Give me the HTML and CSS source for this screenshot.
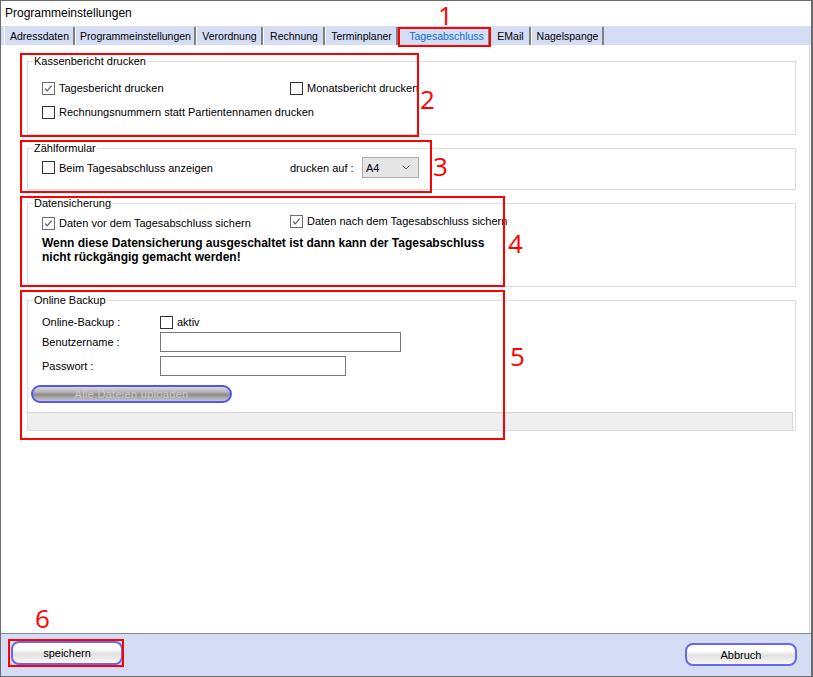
FILE: index.html
```html
<!DOCTYPE html>
<html lang="de">
<head>
<meta charset="utf-8">
<title>Programmeinstellungen</title>
<link rel="stylesheet" href="styles.css">
</head>
<body>
<div class="window">
  <div class="titlebar">Programmeinstellungen</div>
  <div class="tabs">
    <span class="tab t-adr">Adressdaten</span>
    <span class="tab t-prog">Programmeinstellungen</span>
    <span class="tab t-ver">Verordnung</span>
    <span class="tab t-rech">Rechnung</span>
    <span class="tab t-term">Terminplaner</span>
    <span class="tab t-tag active">Tagesabschluss</span>
    <span class="tab t-mail">EMail</span>
    <span class="tab t-nagel">Nagelspange</span>
  </div>
  <div class="content">
    <fieldset class="group g1">
      <legend>Kassenbericht drucken</legend>
      <div class="row r1">
        <label class="cb col1"><span class="box checked"><svg viewBox="0 0 13 13"><polyline points="2.5,6.5 5,9.2 10.2,3.2"/></svg></span>Tagesbericht drucken</label>
        <label class="cb"><span class="box"></span>Monatsbericht drucken</label>
      </div>
      <div class="row r2">
        <label class="cb"><span class="box"></span>Rechnungsnummern statt Partientennamen drucken</label>
      </div>
    </fieldset>

    <fieldset class="group g2">
      <legend>Zählformular</legend>
      <div class="row">
        <label class="cb col1"><span class="box"></span>Beim Tagesabschluss anzeigen</label>
        <span class="druck">drucken auf :</span>
        <span class="select">A4<svg class="chev" viewBox="0 0 8 5"><polyline points="0.5,0.5 4,4 7.5,0.5"/></svg></span>
      </div>
    </fieldset>

    <fieldset class="group g3">
      <legend>Datensicherung</legend>
      <div class="row r1">
        <label class="cb col1 vor"><span class="box checked"><svg viewBox="0 0 13 13"><polyline points="2.5,6.5 5,9.2 10.2,3.2"/></svg></span>Daten vor dem Tagesabschluss sichern</label>
        <label class="cb nach"><span class="box checked"><svg viewBox="0 0 13 13"><polyline points="2.5,6.5 5,9.2 10.2,3.2"/></svg></span>Daten nach dem Tagesabschluss sichern</label>
      </div>
      <p class="warn">Wenn diese Datensicherung ausgeschaltet ist dann kann der Tagesabschluss<br>nicht rückgängig gemacht werden!</p>
    </fieldset>

    <fieldset class="group g4">
      <legend>Online Backup</legend>
      <div class="row f1">
        <span class="flabel">Online-Backup :</span>
        <label class="cb"><span class="box"></span>aktiv</label>
      </div>
      <div class="row f2">
        <span class="flabel">Benutzername :</span>
        <span class="input wide"></span>
      </div>
      <div class="row f3">
        <span class="flabel">Passwort :</span>
        <span class="input narrow"></span>
      </div>
      <button class="upload" disabled>Alle Dateien uploaden</button>
      <div class="band"></div>
    </fieldset>
  </div>
  <div class="footer">
    <button class="btn">speichern</button>
    <button class="btn abbruch">Abbruch</button>
  </div>
</div>

<div class="anno a1"></div>
<div class="anno a2"></div>
<div class="anno a3"></div>
<div class="anno a4"></div>
<div class="anno a5"></div>
<div class="anno a6"></div>
<span class="num n1">1</span>
<span class="num n2">2</span>
<span class="num n3">3</span>
<span class="num n4">4</span>
<span class="num n5">5</span>
<span class="num n6">6</span>
</body>
</html>
```

FILE: styles.css
```css
html, body {
  margin: 0;
  padding: 0;
  background: #fff;
}
body {
  position: relative;
  width: 813px;
  height: 677px;
  overflow: hidden;
  font-family: "Liberation Sans", Arial, sans-serif;
  font-size: 11px;
  color: #000;
}
.window {
  width: 813px;
  height: 677px;
  box-sizing: border-box;
  border: 1px solid #6b6b6b;
  border-right: 2px solid #6b6b6b;
  display: flex;
  flex-direction: column;
  background: #fff;
}
.titlebar {
  height: 25px;
  line-height: 25px;
  padding-left: 4px;
  font-size: 12px;
  flex: none;
}
.tabs {
  height: 19px;
  flex: none;
  background: #d4ddf4;
  display: flex;
  align-items: flex-end;
  padding-left: 3px;
}
.tab {
  height: 18px;
  line-height: 18px;
  box-sizing: border-box;
  padding: 0 0 0 1px;
  border-left: 1px solid #fff;
  border-right: 2px solid #808080;
  white-space: nowrap;
  font-size: 10.5px;
  text-align: center;
  flex: none;
}
.t-adr { width: 71px; }
.t-prog { width: 121px; }
.t-ver { width: 67px; }
.t-rech { width: 62px; }
.t-term { width: 73px; }
.t-tag { width: 92px; }
.t-mail { width: 41px; }
.t-nagel { width: 73px; }
.tab.active {
  color: #0a6fd6;
  padding-left: 6px;
}
.content {
  flex: 1;
  min-height: 0;
  border-right: 1px solid #d2d2d2;
  margin-right: 1px;
  padding: 10px 13px 0 26px;
}
.group {
  margin: 0 0 7px 0;
  padding: 0;
  border: 1px solid #dcdcdc;
  box-sizing: border-box;
  min-width: 0;
}
.group legend {
  font-size: 11px;
  line-height: 13px;
  padding: 0 1px;
  margin-left: 5px;
}
.g1 { height: 80px; }
.g2 { height: 48px; }
.g3 { height: 90px; }
.g4 { height: 137px; }

.row {
  display: flex;
  align-items: center;
  padding-left: 14px;
}
.col1 { width: 248px; flex: none; }
.cb {
  display: flex;
  align-items: center;
  height: 16px;
  white-space: nowrap;
}
.box {
  width: 13px;
  height: 13px;
  box-sizing: border-box;
  border: 1px solid #333;
  background: #fff;
  margin-right: 4px;
  flex: none;
  display: block;
}
.box.checked {
  border-color: #6e6e6e;
}
.box svg {
  display: block;
  width: 11px;
  height: 11px;
  fill: none;
  stroke: #5c5c5c;
  stroke-width: 1.4;
}
.g1 .r1 { margin-top: 12px; }
.g1 .r2 { margin-top: 8px; }

.g2 .row { margin-top: 2px; height: 21px; }
.druck { width: 72px; flex: none; }
.select {
  width: 57px;
  height: 21px;
  box-sizing: border-box;
  background: #e5e5e5;
  border: 1px solid #adadad;
  padding-left: 3px;
  display: flex;
  align-items: center;
  justify-content: space-between;
  padding-right: 8px;
  font-size: 11px;
}
.chev {
  width: 8px;
  height: 5px;
  fill: none;
  stroke: #555;
  stroke-width: 1;
}

.g3 .r1 { margin-top: 3px; align-items: flex-start; height: 18px; }
.g3 .vor { margin-top: 2px; }
.warn {
  margin: 5px 0 0 14px;
  font-weight: bold;
  font-size: 12px;
  line-height: 14px;
}

.flabel { width: 118px; flex: none; }
.f1 { margin-top: 7px; height: 16px; }
.f2 { margin-top: 2px; height: 20px; }
.f3 { margin-top: 4px; height: 20px; }
.input {
  height: 20px;
  box-sizing: border-box;
  border: 1px solid #7a7a7a;
  background: #fff;
  display: block;
}
.input.wide { width: 241px; }
.input.narrow { width: 186px; }
.upload {
  display: block;
  margin: 9px 0 0 3px;
  width: 201px;
  height: 18px;
  box-sizing: border-box;
  border: 2px solid #5555f2;
  border-radius: 9px;
  background: linear-gradient(#d9d9d9 0%, #b5b5b5 35%, #8c8c8c 55%, #b0b0b0 80%, #c8c8c8 100%);
  color: #c9c9c9;
  font-family: "Liberation Sans", Arial, sans-serif;
  font-size: 11px;
  line-height: 12px;
  padding: 0;
  letter-spacing: 0.3px;
}
.band {
  margin: 9px 2px 0 0;
  height: 18px;
  box-sizing: border-box;
  background: #efefef;
  border-top: 1px solid #d6d6d6;
  border-right: 1px solid #d6d6d6;
}

.footer {
  height: 43px;
  flex: none;
  box-sizing: border-box;
  border-top: 1px solid #8a8a8a;
  background: #d4ddf4;
  display: flex;
  justify-content: space-between;
  align-items: flex-start;
  padding: 7px 14px 0 10px;
}
.btn {
  width: 112px;
  height: 24px;
  box-sizing: border-box;
  border: 2px solid #6767f0;
  border-radius: 8px;
  background: linear-gradient(#ffffff 0%, #ffffff 30%, #e2e2e2 55%, #ededed 80%, #fafafa 100%);
  font-family: "Liberation Sans", Arial, sans-serif;
  font-size: 11px;
  color: #000;
  padding: 0;
}
.btn.abbruch { margin-top: 2px; height: 23px; }

.anno {
  position: absolute;
  box-sizing: border-box;
  border: 2px solid #ff0000;
  pointer-events: none;
}
.a1 { left: 398px; top: 27px; width: 93px; height: 20px; }
.a2 { left: 20px; top: 53px; width: 399px; height: 84px; }
.a3 { left: 20px; top: 140px; width: 412px; height: 53px; }
.a4 { left: 20px; top: 196px; width: 485px; height: 91px; }
.a5 { left: 20px; top: 290px; width: 485px; height: 150px; }
.a6 { left: 8px; top: 639px; width: 116px; height: 28px; }
.num {
  position: absolute;
  color: #ff0000;
  font-family: "Open Sans", sans-serif;
  font-size: 26px;
  line-height: 26px;
}
.n1 { left: 438px; top: 2px; }
.n2 { left: 420px; top: 86px; }
.n3 { left: 433px; top: 153px; }
.n4 { left: 508px; top: 230px; }
.n5 { left: 510px; top: 343px; }
.n6 { left: 35px; top: 605px; }
```
